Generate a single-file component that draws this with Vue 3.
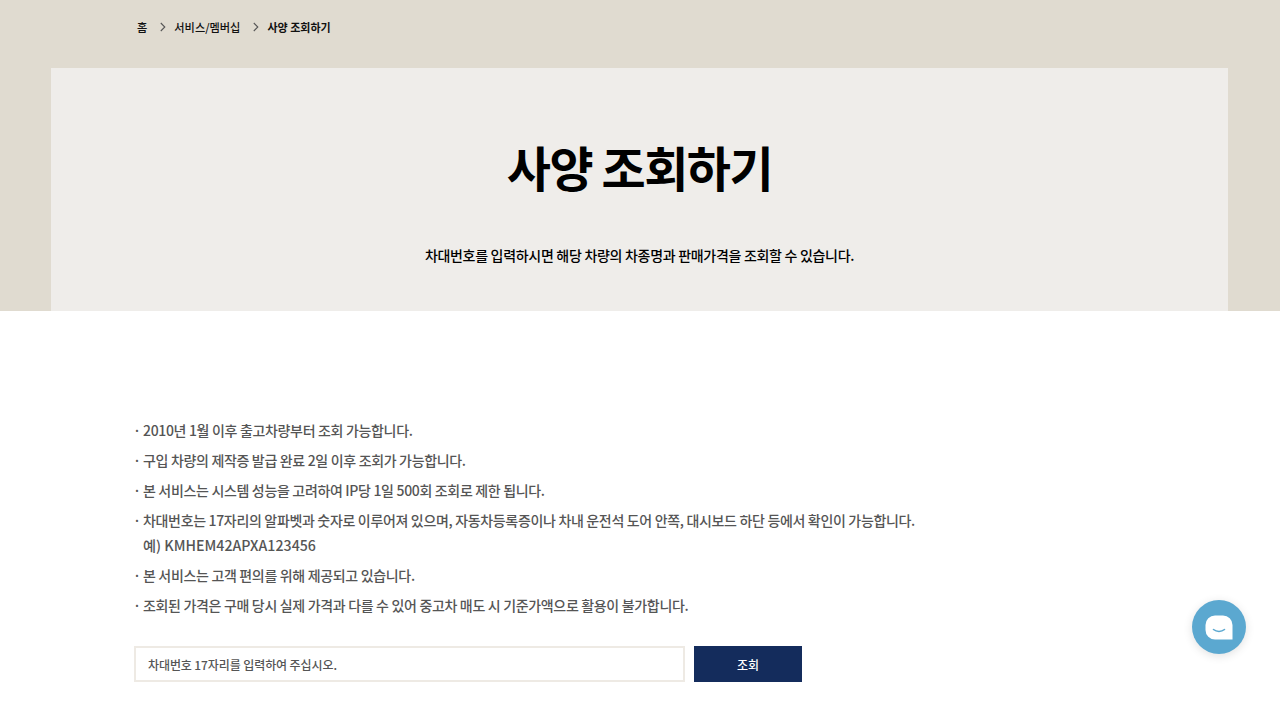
<template>
  <div class="page">
    <section class="top">
      <nav class="crumbs">
        <span>홈</span>
        <svg class="arrow" width="6" height="10" viewBox="0 0 6 10"><path d="M0.8 1l4 4-4 4" fill="none" stroke="#555" stroke-width="1.1" /></svg>
        <span>서비스/멤버십</span>
        <svg class="arrow" width="6" height="10" viewBox="0 0 6 10"><path d="M0.8 1l4 4-4 4" fill="none" stroke="#555" stroke-width="1.1" /></svg>
        <strong>사양 조회하기</strong>
      </nav>
      <div class="hero">
        <h1>사양 조회하기</h1>
        <p>차대번호를 입력하시면 해당 차량의 차종명과 판매가격을 조회할 수 있습니다.</p>
      </div>
    </section>

    <main class="content">
      <ul class="notes">
        <li v-for="note in notes" :key="note[0]">
          <span>{{ note[0] }}</span>
          <span v-if="note[1]" class="sub">{{ note[1] }}</span>
        </li>
      </ul>
      <form class="search" @submit.prevent>
        <input type="text" placeholder="차대번호 17자리를 입력하여 주십시오." />
        <button type="submit">조회</button>
      </form>
    </main>

    <button class="chat" aria-label="chat">
      <svg width="28" height="25" viewBox="0 0 28 25">
        <path d="M10 0.5h8a9.5 9.5 0 0 1 9.5 9.5v14.5H10a9.5 9.5 0 0 1-9.5-9.5V10A9.5 9.5 0 0 1 10 0.5z" fill="#fff" />
        <path d="M8.5 14.5c3.2 2.6 7.8 2.6 11 0" fill="none" stroke="#5ba8d0" stroke-width="1.6" stroke-linecap="round" />
      </svg>
    </button>
  </div>
</template>

<script setup>
const notes = [
  ['2010년 1월 이후 출고차량부터 조회 가능합니다.'],
  ['구입 차량의 제작증 발급 완료 2일 이후 조회가 가능합니다.'],
  ['본 서비스는 시스템 성능을 고려하여 IP당 1일 500회 조회로 제한 됩니다.'],
  ['차대번호는 17자리의 알파벳과 숫자로 이루어져 있으며, 자동차등록증이나 차내 운전석 도어 안쪽, 대시보드 하단 등에서 확인이 가능합니다.', '예) KMHEM42APXA123456'],
  ['본 서비스는 고객 편의를 위해 제공되고 있습니다.'],
  ['조회된 가격은 구매 당시 실제 가격과 다를 수 있어 중고차 매도 시 기준가액으로 활용이 불가합니다.'],
]
</script>

<style>
html, body {
  background: #fff;
}
</style>

<style scoped>
.page {
  width: 1280px;
  height: 720px;
  overflow: hidden;
  font-family: "Noto Sans CJK KR", "Noto Sans", sans-serif;
  color: #000;
}

.top {
  height: 311px;
  background: #e0dbd0;
  padding: 0 52px 0 51px;
  box-sizing: border-box;
}

.crumbs {
  height: 68px;
  padding: 0 0 15px 86px;
  box-sizing: border-box;
  display: flex;
  align-items: center;
  font-size: 11.2px;
  font-weight: 500;
  color: #111;
}

.crumbs strong {
  font-size: 11px;
  font-weight: 700;
}

.arrow {
  margin: 0 8px 0 13px;
}

.hero {
  height: 243px;
  background: #efedea;
  text-align: center;
  padding-top: 62px;
  box-sizing: border-box;
}

.hero h1 {
  margin: 0;
  font-size: 48px;
  line-height: 72px;
  font-weight: 700;
  letter-spacing: -1.5px;
}

.hero p {
  margin: 41px 0 0;
  font-size: 14px;
  line-height: 24px;
  font-weight: 500;
  letter-spacing: -0.3px;
}

.content {
  padding: 107px 0 0 135px;
}

.notes {
  list-style: none;
  margin: 0;
  padding: 0;
  font-size: 14px;
  line-height: 25px;
  font-weight: 500;
  color: #555;
  letter-spacing: -0.33px;
}

.notes li {
  position: relative;
  padding-left: 8px;
  margin-bottom: 5px;
}

.notes li::before {
  content: "·";
  position: absolute;
  left: -2px;
  top: 0;
}

.notes .sub {
  display: block;
  font-size: 14.2px;
  letter-spacing: 0;
}

.search {
  display: flex;
  gap: 9px;
  margin: 28px 0 0 -1px;
}

.search input {
  width: 551px;
  height: 36px;
  box-sizing: border-box;
  border: 2px solid #eeeae4;
  padding: 0 12px;
  font: 500 12px "Noto Sans CJK KR", sans-serif;
  letter-spacing: -0.1px;
  color: #555;
  outline: none;
}

.search input::placeholder {
  color: #555;
  opacity: 1;
}

.search button {
  width: 108px;
  height: 36px;
  border: 0;
  background: #142c5c;
  color: #fff;
  font: 500 12px "Noto Sans CJK KR", sans-serif;
}

.chat {
  position: absolute;
  left: 1192px;
  top: 600px;
  width: 54px;
  height: 54px;
  border: 0;
  border-radius: 50%;
  background: #5ba8d0;
  box-shadow: 0 2px 10px rgba(0, 0, 0, 0.12);
  display: flex;
  align-items: center;
  justify-content: center;
  padding: 0;
}
</style>
